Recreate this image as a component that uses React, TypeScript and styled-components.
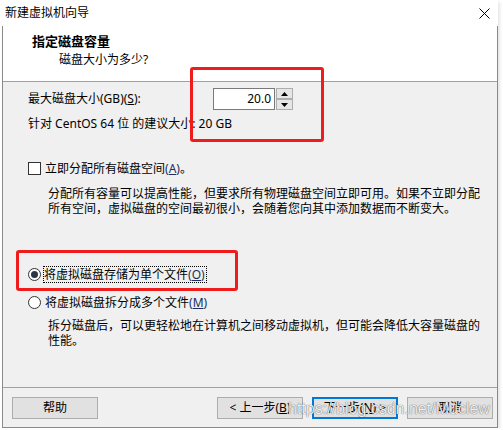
import React from "react";
import styled, { createGlobalStyle } from "styled-components";

const Global = createGlobalStyle`
  html, body { margin: 0; padding: 0; background: #fff; }
  body {
    font-family: "Noto Sans", "Noto Sans CJK SC", sans-serif;
    font-size: 12px;
    color: #000;
  }
  * { box-sizing: border-box; }
`;

const Window = styled.div`
  position: relative;
  width: 496px;
  margin-left: 2px;
  box-shadow: 2px 2px 3px rgba(0, 0, 0, 0.1);
`;

const TitleBar = styled.div`
  height: 26px;
  background: #fff;
  display: flex;
  align-items: center;
  justify-content: space-between;
  padding: 0 8px 0 3px;
  line-height: 16px;
`;

const Body = styled.div`
  border: 1px solid #8a8a8a;
  border-top: none;
`;

const Header = styled.div`
  height: 56px;
  background: #fff;
  border-bottom: 1px solid #a0a0a0;
  padding: 7px 0 0 29px;
`;

const HeaderTitle = styled.div`
  font-weight: bold;
  font-size: 13px;
  line-height: 17px;
`;

const HeaderSub = styled.div`
  margin-top: 2px;
  padding-left: 27px;
  line-height: 16px;
`;

const Main = styled.div`
  height: 306px;
  background: #f0f0f0;
  border-bottom: 1px solid #a0a0a0;
  padding: 6px 0 0 25px;
`;

const SizeRow = styled.div`
  display: flex;
  align-items: center;
  height: 22px;
`;

const FieldLabel = styled.div`
  width: 185px;
  line-height: 16px;
`;

const NumberBox = styled.div`
  width: 62px;
  height: 22px;
  background: #fff;
  border: 1px solid #7a7a7a;
  text-align: right;
  padding-right: 3px;
  line-height: 20px;
`;

const Spinner = styled.div`
  margin-left: 1px;
  width: 17px;
  height: 22px;
  display: flex;
  flex-direction: column;
`;

const SpinButton = styled.div`
  flex: 1;
  background: #e6e6e6;
  border: 1px solid #adadad;
  display: flex;
  align-items: center;
  justify-content: center;
`;

const Line = styled.div<{ $mt: number }>`
  margin-top: ${(p) => p.$mt}px;
  line-height: 16px;
  white-space: nowrap;
`;

const OptionRow = styled.div<{ $mt: number }>`
  margin-top: ${(p) => p.$mt}px;
  display: flex;
  align-items: center;
  height: 16px;
  white-space: nowrap;
`;

const CheckBox = styled.span`
  width: 13px;
  height: 13px;
  border: 1px solid #333;
  background: #fff;
  flex: none;
`;

const Radio = styled.span<{ $on?: boolean }>`
  width: 13px;
  height: 13px;
  border: 1px solid #333;
  border-radius: 50%;
  background: #fff;
  flex: none;
  display: flex;
  align-items: center;
  justify-content: center;
  &::after {
    content: "";
    display: ${(p) => (p.$on ? "block" : "none")};
    width: 7px;
    height: 7px;
    border-radius: 50%;
    background: #2b3544;
  }
`;

const OptionText = styled.span<{ $focus?: boolean }>`
  margin-left: ${(p) => (p.$focus ? 2 : 3)}px;
  line-height: 15px;
  border: 1px dotted ${(p) => (p.$focus ? "#000" : "transparent")};
  padding-right: 1px;
`;

const Key = styled.span`
  color: #1c2d5e;
`;

const U = styled.span`
  text-decoration: underline;
  text-underline-offset: 1px;
`;

const Desc = styled.div<{ $mt: number }>`
  margin-top: ${(p) => p.$mt}px;
  padding-left: 20px;
  line-height: 15px;
  white-space: nowrap;
`;

const Footer = styled.div`
  height: 39px;
  background: #f0f0f0;
  display: flex;
  align-items: flex-start;
  padding: 9px 4px 0 9px;
  gap: 9px;
`;

const Button = styled.div<{ $focus?: boolean; $push?: boolean }>`
  width: 86px;
  height: 22px;
  background: #e1e1e1;
  border: ${(p) => (p.$focus ? "2px solid #0078d7" : "1px solid #adadad")};
  display: flex;
  align-items: center;
  justify-content: center;
  line-height: 16px;
  margin-right: ${(p) => (p.$push ? "auto" : "0")};
`;

const Annotation = styled.div<{ $x: number; $y: number; $w: number; $h: number }>`
  position: absolute;
  left: ${(p) => p.$x}px;
  top: ${(p) => p.$y}px;
  width: ${(p) => p.$w}px;
  height: ${(p) => p.$h}px;
  border: 3px solid #f01c1c;
  border-radius: 3px;
  pointer-events: none;
`;

const Watermark = styled.div`
  position: absolute;
  left: 286px;
  top: 399px;
  font-family: "Liberation Sans", Arial, sans-serif;
  font-size: 16px;
  line-height: 20px;
  color: rgba(255, 255, 255, 0.92);
  text-shadow: 0 0 1px rgba(0, 0, 0, 0.6), 0 0 1px rgba(0, 0, 0, 0.3);
  pointer-events: none;
`;

const Triangle = ({ up }: { up?: boolean }) => (
  <svg width="7" height="4" viewBox="0 0 7 4">
    <path d={up ? "M0 4 L3.5 0 L7 4 Z" : "M0 0 L3.5 4 L7 0 Z"} fill="#000" />
  </svg>
);

export default function App() {
  return (
    <>
      <Global />
      <Window>
        <TitleBar>
          <span>新建虚拟机向导</span>
          <svg width="11" height="11" viewBox="0 0 11 11">
            <path d="M0.5 0.5 L10.5 10.5 M10.5 0.5 L0.5 10.5" stroke="#000" strokeWidth="1" />
          </svg>
        </TitleBar>
        <Body>
          <Header>
            <HeaderTitle>指定磁盘容量</HeaderTitle>
            <HeaderSub>磁盘大小为多少?</HeaderSub>
          </Header>
          <Main>
            <SizeRow>
              <FieldLabel>
                最大磁盘大小(GB)(<U>S</U>):
              </FieldLabel>
              <NumberBox>20.0</NumberBox>
              <Spinner>
                <SpinButton>
                  <Triangle up />
                </SpinButton>
                <SpinButton>
                  <Triangle />
                </SpinButton>
              </Spinner>
            </SizeRow>
            <Line $mt={6}>针对 CentOS 64 位 的建议大小: 20 GB</Line>
            <OptionRow $mt={28}>
              <CheckBox />
              <OptionText>
                立即分配所有磁盘空间<Key>(<U>A</U>)</Key>。
              </OptionText>
            </OptionRow>
            <Desc $mt={10}>
              分配所有容量可以提高性能，但要求所有物理磁盘空间立即可用。如果不立即分配
              <br />
              所有空间，虚拟磁盘的空间最初很小，会随着您向其中添加数据而不断变大。
            </Desc>
            <OptionRow $mt={50}>
              <Radio $on />
              <OptionText $focus>
                将虚拟磁盘存储为单个文件<Key>(<U>O</U>)</Key>
              </OptionText>
            </OptionRow>
            <OptionRow $mt={12}>
              <Radio />
              <OptionText>
                将虚拟磁盘拆分成多个文件<Key>(<U>M</U>)</Key>
              </OptionText>
            </OptionRow>
            <Desc $mt={8}>
              拆分磁盘后，可以更轻松地在计算机之间移动虚拟机，但可能会降低大容量磁盘的
              <br />
              性能。
            </Desc>
          </Main>
          <Footer>
            <Button $push>帮助</Button>
            <Button>
              &lt; 上一步(<U>B</U>)
            </Button>
            <Button $focus>
              下一步(<U>N</U>) &gt;
            </Button>
            <Button>取消</Button>
          </Footer>
        </Body>
        <Annotation $x={188} $y={67} $w={134} $h={75} />
        <Annotation $x={14} $y={250} $w={222} $h={41} />
        <Watermark>https://blog.csdn.net/Muclew</Watermark>
      </Window>
    </>
  );
}
